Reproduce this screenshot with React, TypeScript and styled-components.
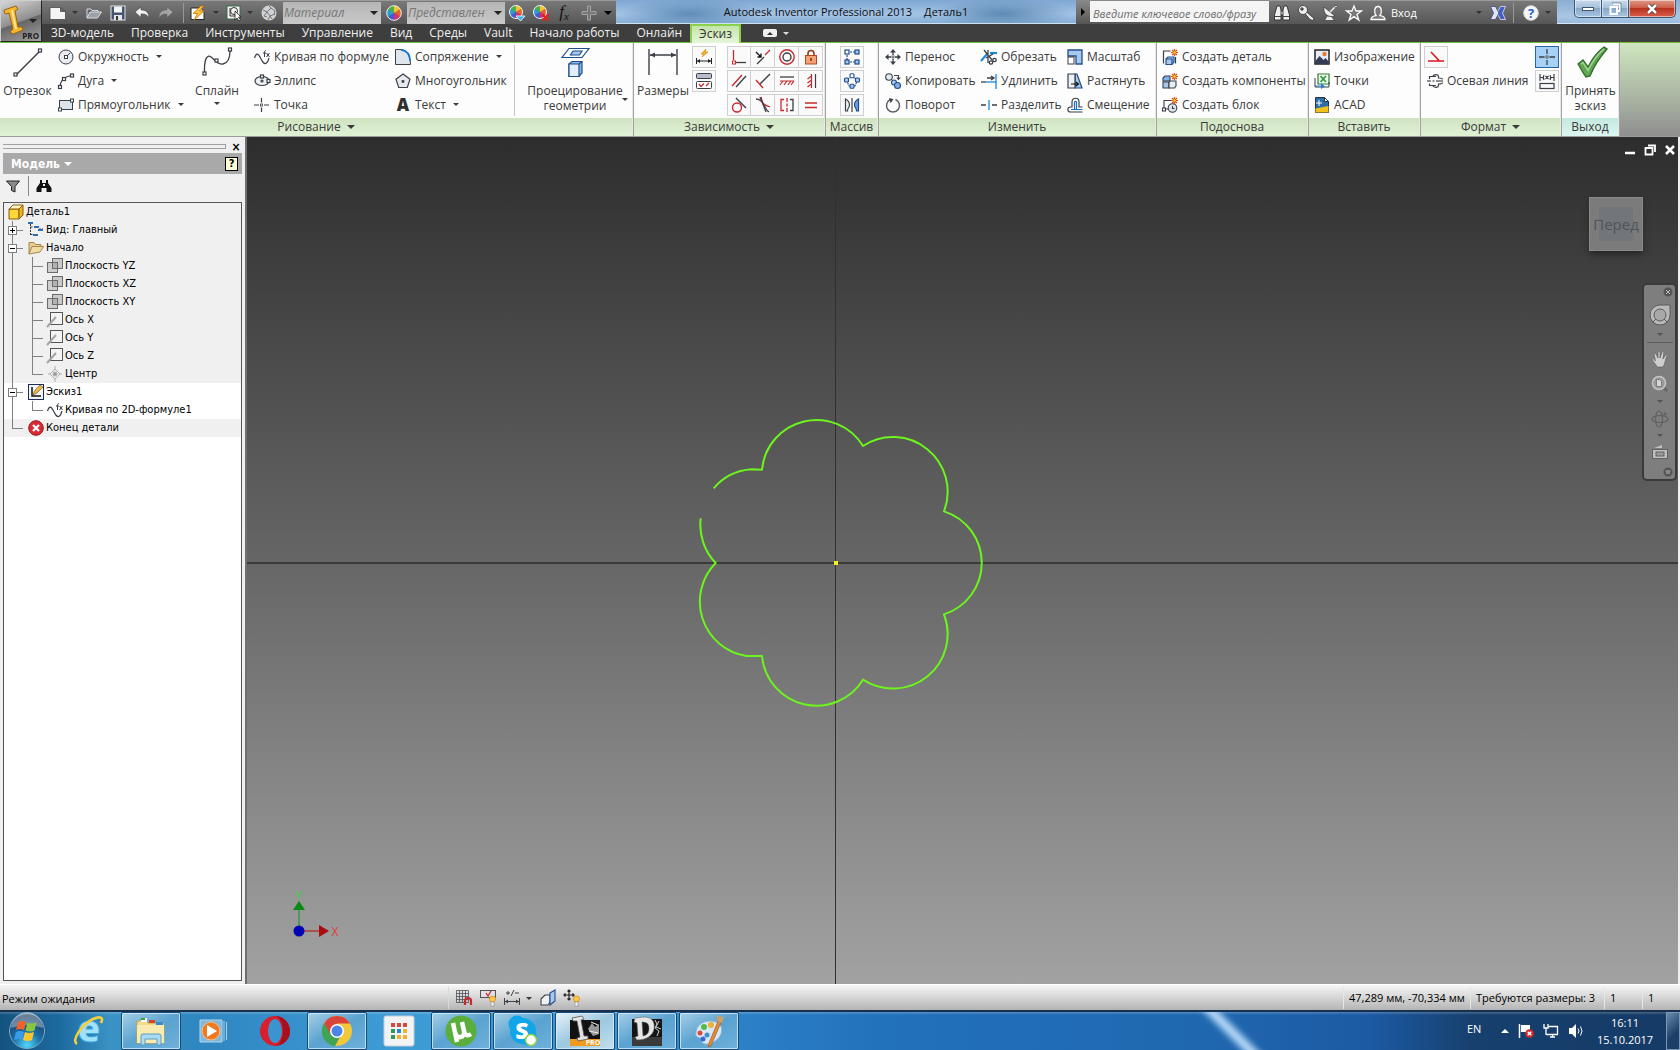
import React, { ReactNode } from "react";
import styled, { createGlobalStyle, css } from "styled-components";

const UI = `"Open Sans", "Noto Sans", sans-serif`;
const TAHOMA = `"DejaVu Sans Condensed", "DejaVu Sans", sans-serif`;

const Global = createGlobalStyle`
  * { box-sizing: border-box; }
  html, body { margin: 0; height: 100%; overflow: hidden; }
  #root { height: 100vh; }
  body { font-family: ${UI}; font-size: 12px; color: #3a3a3a; background: #3e3e3e; }
  button { font: inherit; color: inherit; border: 0; padding: 0; margin: 0; background: none; cursor: default; }
  svg { display: block; flex: none; overflow: visible; }
`;

/* ---------- icons ---------- */

const dk = "#3b3f46";
const bl = "#1f4f8a";
const lb = "#a9c8ee";
const rd = "#c8282c";

const node = (x: number, y: number, s = dk) => (
  <rect x={x - 1.5} y={y - 1.5} width="3" height="3" fill="#fff" stroke={s} />
);
const spark = (
  <g stroke="#d8540e" strokeWidth="1.2">
    <path d="M12.5 0v7M9 3.5h7M10 1l5 5M15 1l-5 5" />
    <circle cx="12.5" cy="3.5" r="1.6" fill="#ffd24a" stroke="#d8540e" strokeWidth=".6" />
  </g>
);
const wheel = (cx: number, cy: number, r: number) => {
  const cols = ["#f4c430", "#e8622c", "#d22f7c", "#4a58c8", "#2c9bd8", "#4bb04a"];
  return (
    <g>
      {cols.map((c, i) => {
        const a = (i * Math.PI) / 3 - Math.PI / 2;
        const b = a + Math.PI / 3;
        return (
          <path
            key={c}
            fill={c}
            d={`M${cx} ${cy}L${cx + r * Math.cos(a)} ${cy + r * Math.sin(a)}A${r} ${r} 0 0 1 ${cx + r * Math.cos(b)} ${cy + r * Math.sin(b)}Z`}
          />
        );
      })}
      <circle cx={cx} cy={cy} r={r} fill="none" stroke="#f2f2f2" />
    </g>
  );
};
const hatch = (
  <g stroke={rd} strokeWidth="1.1" fill="none">
    <path d="M1 8h14M4 8l-3 4M8 8l-3 4M12 8l-3 4M15 8l-3 4" />
  </g>
);
const bulb = (
  <g>
    <circle cx="12.5" cy="9" r="3" fill="#ffc94a" stroke="#d88a1c" strokeWidth=".8" />
    <rect x="11" y="12" width="3" height="4" fill="#f4f4f4" stroke="#888" strokeWidth=".6" />
  </g>
);
const plane = (
  <g stroke="#6c6c6c" fill="#c9c9c9">
    <rect x="5.5" y=".5" width="10" height="10" />
    <rect x=".5" y="4.5" width="10" height="10" fill="#c4c4c4" fillOpacity=".8" />
    <rect x="5.5" y="4.5" width="5" height="6" fill="#b2b2b2" />
  </g>
);
const axis = (
  <g>
    <rect x="3.5" y=".5" width="12" height="12" fill="#f4f4f4" stroke="#555" />
    <path d="M0 15L9 5" stroke="#a5a5a5" strokeWidth="2" />
  </g>
);
const curveFx = (
  <g fill="none" stroke={dk} strokeWidth="1.2">
    <path d="M.5 9C2 4 4 4 6 8s4 8 6.500 6c1.500-1 2-3 2.500-5" />
    <path d="M10.500 8V3.500c0-1.500.5-2 1.500-2M9 4h3M12.500 4l3 4M15.500 4l-3 4" strokeWidth="1" />
  </g>
);

const icons: Record<string, ReactNode> = {
  circle: <g fill="#e9edf2" stroke={dk}><circle cx="8" cy="8" r="7" /><path d="M8 8l4-4" />{node(8, 8)}</g>,
  arc: <g fill="none" stroke={dk} strokeWidth="1.2"><path d="M2 14C2 8 7 3 14 2.500" />{node(2, 14)}{node(6, 6)}{node(14, 2.5)}</g>,
  rect: <g fill="#dde3ea" stroke={dk}><rect x="1.500" y="3.500" width="13" height="9" />{node(2, 12.5)}{node(14, 3.5)}</g>,
  curve: curveFx,
  ellipse: <g fill="#eceff3" stroke={dk} strokeWidth="1.200"><ellipse cx="8" cy="8" rx="7" ry="4.500" /><circle cx="8" cy="8" r="1" />{node(8, 3.5)}{node(14.5, 8)}</g>,
  point: <g stroke={dk} strokeWidth="1.200"><path d="M0 8h5M10 8h5M7.500 1v4.500M7.500 10.500V15" /><rect x="6.500" y="7" width="2" height="2" fill="#fff" strokeWidth=".8" /></g>,
  fillet: <g><path d="M.5 .5H6C12 1 15 6 15.500 15.500H.5z" fill="#dfe5ec" stroke={dk} /><path d="M6 .8C12 1.500 15 6 15.200 12" fill="none" stroke="#1677d2" strokeWidth="1.800" /></g>,
  polygon: <g fill="#e6eaef" stroke={dk} strokeWidth="1.200"><path d="M8 1l7 5.200-2.700 8.300H3.700L1 6.200z" /><rect x="7" y="7.500" width="2" height="2" fill={dk} strokeWidth=".6" /></g>,
  text: <text x="8" y="14" textAnchor="middle" fontFamily="Open Sans" fontWeight="800" fontSize="17" fill="#2e2e2e">A</text>,
  line: <g fill="none" stroke={dk} strokeWidth="1.400"><path d="M3 28L27 4" /><g strokeWidth="1.200"><rect x="1" y="26" width="3" height="3" fill="#fff" /><rect x="25.500" y="2" width="3" height="3" fill="#fff" /></g></g>,
  spline: <g fill="none" stroke={dk} strokeWidth="1.300"><path d="M2.500 26C2 12 5 7 9 10s7 8 12 7 7-6 7-13" /><g fill="#fff" strokeWidth="1.200"><rect x="1" y="25" width="3" height="3" /><rect x="13" y="12" width="3" height="3" /><rect x="26.500" y="1" width="3" height="3" /></g></g>,
  project: <g stroke={bl} strokeWidth="1.200"><path d="M9 1.500h20l-7 9H2z" fill="#fff" /><path d="M13 4h9l-2.500 4h-9z" fill={lb} /><path d="M9 17l3-2.500h10V26l-3 3.500H9z" fill="#8fb4e4" /><path d="M9 17h10v12.500H9z" fill="#e3eefb" /><path d="M19 17l3-2.500" /></g>,
  dims: <g fill="none" stroke={dk} strokeWidth="1.400"><path d="M1 2v26M29 2v26M2 8h26" /><path d="M2 8l5-2.500v5zM28 8l-5-2.500v5z" fill={dk} stroke="none" /></g>,
  autodim: <g><path d="M10 0L5 5h3L6 8l6-5H9z" fill="#f5b52a" stroke="#d8860e" strokeWidth=".7" /><g stroke="#222" fill="none"><path d="M.5 9v6M15.500 9v6M1 12h14" /><path d="M1 12l3-2v4zM15 12l-3-2v4z" fill="#222" stroke="none" /></g></g>,
  showcon: <g stroke={dk}><rect x=".5" y=".5" width="15" height="5" rx="1" fill="#b9bfc8" /><rect x=".5" y="8.500" width="15" height="7" rx="1" fill="#fff" /><path d="M3 11l2 2.500 3-3M10 13l3-3" fill="none" stroke={rd} strokeWidth="1.300" /></g>,
  coincident: <g fill="none"><path d="M2.500 1v10" stroke={rd} strokeWidth="1.300" /><path d="M5 13.500h10" stroke={dk} strokeWidth="1.300" /><rect x="1.500" y="12" width="3" height="3" fill="#fff" stroke={rd} /></g>,
  collinear: <g fill="none" strokeWidth="1.300"><path d="M15 1L10 6" stroke={rd} /><path d="M9 8l-7 7" stroke={dk} /><path d="M1 3l5 5M6 4.500V8H2.500" stroke="#111" /></g>,
  concentric: <g fill="none" strokeWidth="1.400"><circle cx="8" cy="8" r="7.200" stroke={rd} /><circle cx="8" cy="8" r="4" stroke={dk} /></g>,
  lock: <g><path d="M5 7V4.500a3 3 0 016 0V7" fill="none" stroke="#8c3a1a" strokeWidth="1.600" /><rect x="2.500" y="6.500" width="11" height="8.500" fill="#f2a274" stroke="#b8461c" /><path d="M8 9v3" stroke="#7c2a10" strokeWidth="1.500" /></g>,
  parallel: <g strokeWidth="1.400"><path d="M1 13L11 2" stroke={rd} /><path d="M5 14L15 3" stroke={dk} /></g>,
  perp: <g strokeWidth="1.400" fill="none"><path d="M5 11L15 1" stroke={dk} /><path d="M1 7l7 8" stroke={rd} /></g>,
  horiz: <g><path d="M1 4h14" stroke={dk} strokeWidth="1.300" />{hatch}</g>,
  vert: <g fill="none" strokeWidth="1.200"><path d="M8.500 1v14M8.500 3l-4 3M8.500 7l-4 3M8.500 11l-4 3" stroke={rd} /><path d="M12.500 1v14" stroke={dk} /></g>,
  tangent: <g fill="none" strokeWidth="1.400"><circle cx="6" cy="10.500" r="4.500" stroke={rd} /><path d="M5 1l10 10" stroke={dk} /></g>,
  smooth: <g fill="none" strokeWidth="1.300"><path d="M1 2c5 0 7 4 9 8 1 2 2 4 4 5" stroke={dk} /><path d="M5 0c1 6 4 8 10 10" stroke={rd} /><path d="M6 0c1 5 3 10 5 15" stroke={dk} /></g>,
  symm: <g fill="none" strokeWidth="1.300"><path d="M5 2.500H2v11h3M8 1v4M8 6.500v3M8 11v4" stroke={rd} /><path d="M11 2.500h3v11h-3" stroke={dk} /></g>,
  equal: <path d="M2 6h12M2 10.500h12" stroke={rd} strokeWidth="1.400" />,
  rectarr: <g stroke={bl} fill="#fff" strokeWidth="1.200"><path d="M3 3h10M3 13h10M3 3v10" strokeDasharray="2 1" /><rect x="1" y="1" width="4" height="4" /><rect x="11" y="1" width="4" height="4" fill={lb} /><rect x="1" y="11" width="4" height="4" fill={lb} /><rect x="11" y="11" width="4" height="4" fill={lb} /></g>,
  cirarr: <g stroke={bl} fill={lb} strokeWidth="1.100"><path d="M8 3l5.500 4L11 13H5L2.500 7z" fill="none" strokeDasharray="2 1" /><rect x="6" y=".7" width="4" height="4" rx="1" fill="#fff" /><rect x="11.500" y="5" width="4" height="4" rx="1" /><rect x=".5" y="5" width="4" height="4" rx="1" /><rect x="6" y="11.300" width="4" height="4" rx="1" /></g>,
  mirror: <g strokeWidth="1.200"><path d="M8 1v14" stroke={dk} /><path d="M1.500 14V2c3 1.500 4 3 4 6s-2 2.500-2 6z" fill="#eef2f7" stroke={dk} /><path d="M14.500 14V2c-3 1.500-4 3-4 6s2 2.500 2 6z" fill="#6f9fe0" stroke={bl} /></g>,
  move: <g fill={dk}><path d="M8 0l3 3.500H5zM8 16l3-3.500H5zM0 8l3.500-3v6zM16 8l-3.500-3v6z" /><path d="M8 3v3M8 10v3M3 8h3M10 8h3" stroke={dk} strokeWidth="1.300" /><rect x="7" y="7" width="2" height="2" fill="#fff" stroke={dk} strokeWidth=".8" /></g>,
  copy: <g stroke={dk} strokeWidth="1.100"><circle cx="4" cy="4" r="3.300" fill="#e2ebf7" /><circle cx="9" cy="9.500" r="2.500" fill={lb} stroke={bl} /><circle cx="12.500" cy="12.500" r="3" fill="#86afe6" stroke={bl} /><path d="M9 2.500h4.500V6M11.800 4.500l1.700 2 1.700-2" fill="none" /></g>,
  rotate: <g fill="none" stroke={dk} strokeWidth="1.500"><path d="M10.500 2.500a6.500 6.500 0 11-5 0" stroke="#5a5f66" /><path d="M4 1l4.500 1.200L5.500 6z" fill={dk} stroke="none" /></g>,
  trim: <g fill="none" strokeWidth="1.300"><path d="M9 4h7" stroke="#1c87d8" strokeWidth="2.200" /><path d="M0 12L6 5" stroke="#1c87d8" strokeWidth="2" /><path d="M3 1l8 10M7 14V1M5 9l7-4" stroke={dk} /><circle cx="13.500" cy="11" r="1.700" stroke={dk} /><circle cx="10" cy="13.500" r="1.700" stroke={dk} /></g>,
  extend: <g fill="none" strokeWidth="1.300"><path d="M0 9h5" stroke={dk} /><path d="M5 9h10" stroke="#1c87d8" /><path d="M15 1v15" stroke="#1c87d8" /><path d="M6 5h6M10 3l3 2-3 2" stroke={dk} /></g>,
  split: <g strokeWidth="1.300"><path d="M0 8h5M11 8h5" stroke={dk} /><path d="M8 3v10" stroke="#1c87d8" /></g>,
  scale: <g stroke={bl}><path d="M1 1h14v14H9V7H1z" fill={lb} strokeWidth="1.300" /><rect x="1" y="8" width="6" height="7" fill="#fff" stroke={dk} /></g>,
  stretch: <g strokeWidth="1.200"><path d="M8 1h2l5 14H8z" fill={lb} stroke={bl} /><path d="M1 1h7v14H1z" fill="#eef2f7" stroke={dk} /><path d="M4 11h7M9 9l2.500 2L9 13" fill="none" stroke="#111" /></g>,
  offset: <g fill="none" strokeWidth="1.200"><path d="M15.500 15H3.500c-3.500 0-3.500-5 0-5H5V5c0-5 7-5 7 0v5h3.500" stroke={dk} /><path d="M15.500 12.500H4M7.500 12V5.500c0-1.500 2-1.500 2 0V12" stroke="#1c6fc0" /></g>,
  mkpart: <g strokeWidth="1.200"><path d="M1.500 14.500V2h7" fill="none" stroke={dk} /><path d="M13.500 8v6.500" stroke={dk} /><path d="M4 10l2-2h6v5l-2 2.500H4z" fill={lb} stroke={bl} /><path d="M4 10h6v5.500" fill="none" stroke={bl} />{spark}</g>,
  mkcomp: <g strokeWidth="1.100" stroke={dk}><path d="M1 5l2-2h5v5H1z" fill="#7db4ee" /><path d="M1 9h6v6H1z" fill={lb} /><path d="M7 9l1-1h6v5l-1.500 2H7z" fill="#e8eef6" />{spark}</g>,
  mkblock: <g stroke={dk} strokeWidth="1.100" fill="none"><path d="M2 12V3.500h7M2 12h4" />{node(2, 12.5)}<circle cx="10.500" cy="11" r="4.300" fill="#dfe4ea" /><path d="M10.500 9v2.500h2" />{spark}</g>,
  image: <g><rect x="1" y="1" width="14" height="14" fill="#e8ecf4" stroke="#222" strokeWidth="1.500" /><path d="M1.500 12l4-5 4 4 2-2 3.500 4v2h-13.500z" fill="#333b55" /><circle cx="10.500" cy="5" r="2.200" fill="#e87a3c" /></g>,
  points: <g><path d="M4 1h11v10H4z" fill="#f4fff4" stroke="#2e7a36" strokeWidth="1.200" /><path d="M6.500 3l5.500 6M12 3L6.500 9" stroke="#2e9a3a" strokeWidth="1.800" /><path d="M1 5v9h14V9" fill="none" stroke={dk} /><path d="M1 12.500h6V10l4 3.500L7 16v-2.500H1z" fill="#2c7cd0" /></g>,
  acad: <g><path d="M1.500.5h9l4 4v11h-13z" fill="#2f6ea8" stroke="#234" /><path d="M1.500 15.500v-4l13-2.500v6.500z" fill="#f2c21c" /><path d="M5 3v6M2 6h6" stroke="#fff" /><path d="M10.500.5v4h4z" fill="#fff" stroke="#234" /></g>,
  constr: <g fill="none" stroke="#e0161c" strokeWidth="1.600"><path d="M0 12h16M3 3l8 8.500" /></g>,
  centerline: <g fill="none" stroke={dk} strokeWidth="1.200"><path d="M2.500 6V3.500H9M2.500 10.500V12.500H9M5.500 3.500c2-3 6-2 6 0v1.500c3 0 4 1 4 1.500M5.500 12.500c2 3 6 2 6 0V11c3 0 4-1 4-1.500" /><path d="M0 8h4M5.500 8h2M9 8h7" stroke="#222" /></g>,
  centerpt: <g stroke={dk} strokeWidth="1.300"><path d="M0 8h5.500M10.500 8H16M8 0v5M8 11v5" /><rect x="7" y="7" width="2" height="2" fill="#fff" strokeWidth=".8" /></g>,
  driven: <g fill="none" stroke={dk} strokeWidth="1.200"><path d="M1 1v7M15 1v7M1 4.500h3M12 4.500h3M5 2q-1.500 2.500 0 5M11 2q1.500 2.500 0 5M6.500 3l3 3M9.500 3l-3 3" /><rect x="1" y="10.500" width="14" height="5" /></g>,
  check: <g><path d="M3 18l5-4 5 7C17 13 22 6 29 1l3 2C25 11 19 20 15 30l-4 1C8 27 6 23 3 18z" fill="#62a653" stroke="#2f6b2b" strokeWidth="1.300" /><path d="M6 18l2-1.500 5 8C17 16 22 9 29 3" fill="none" stroke="#a4d594" strokeWidth="1.500" /></g>,
  /* quick access */
  fnew: <path d="M0 2.500h10.500l5 4v8H0zM10.500 2.500v4h5" fill="#f4f4f4" stroke="#4a4a4a" strokeWidth=".8" />,
  fopen: <g stroke="#d9dde2" fill="#5e646b"><path d="M1 13V4h4l1 1.500h6V8" /><path d="M1 13l3-6h11.500l-4 6z" fill="#9ba1a8" /></g>,
  fsave: <g><rect x="1" y="1" width="14" height="14" fill="#47556c" stroke="#dfe3ea" /><rect x="4" y="1.500" width="8" height="6" fill="#f4f4f4" /><rect x="4" y="10" width="8" height="5" fill="#e6e6e6" /><rect x="6" y="11" width="2" height="4" fill="#333" /></g>,
  undo: <path d="M1 7l6-5v3c5 0 8 2.500 8 8-1.500-3-4-4.500-8-4v3.500z" fill="#f1f1f1" stroke="#444" strokeWidth=".6" />,
  redo: <path d="M15 7L9 2v3c-5 0-8 2.500-8 8 1.500-3 4-4.500 8-4v3.500z" fill="#a5a5a5" stroke="#666" strokeWidth=".6" />,
  update: <g><path d="M1 3h10l3 4v7.500H1z" fill="#fff" stroke="#222" /><path d="M11 1L3 8.500h4.500L4 15l10-9H9.500l4-5z" fill="#f8c832" stroke="#d8780e" strokeWidth=".9" /></g>,
  select: <g><rect x="1" y="1" width="13" height="13" fill="#f4f6f4" stroke="#3b6b4a" /><circle cx="8" cy="6" r="3.500" fill="none" stroke="#333" /><path d="M4 3v8h6" fill="none" stroke="#333" /><path d="M9 6v9l2-2 2 3 1.500-1-2-3H15z" fill="#fff" stroke="#222" strokeWidth=".8" /></g>,
  ball: <g><circle cx="8" cy="8" r="7.500" fill="#cfd1d4" /><path d="M2 5l4 2-3 4M6 7l4-4 4 3M6 7l3 4 5-2M9 11l-2 4M10 3L8 1M3 11l3 1M11 14l-2-3M14 6l-1 4" stroke="#777" fill="none" /></g>,
  wheel: wheel(8, 8, 7.3),
  wheelv: <g>{wheel(7, 7, 6.5)}<path d="M7 11h9l-4.500 5z" fill="#38b0ee" stroke="#fff" strokeWidth=".8" /></g>,
  wheelx: <g>{wheel(7, 7, 6.5)}<path d="M9.500 9.500l6 6M15.500 9.500l-6 6" stroke="#e0241c" strokeWidth="2.400" /></g>,
  fx: <text x="7" y="12" textAnchor="middle" fontFamily="Liberation Serif" fontStyle="italic" fontSize="17" fill="#111">f<tspan fontSize="11" dy="3">x</tspan></text>,
  plus: <path d="M6.500 1h3v5.500H15v3H9.500V15h-3V9.500H1v-3h5.500z" fill="#777" stroke="#a3a3a3" />,
  binoc: <g fill="#f0f0f0" stroke="#2c2c2c" strokeWidth=".9"><path d="M6 6h4v4H6z" /><path d="M3 1h3l1 4v10H.5v-5z" /><path d="M13 1h-3L9 5v10h6.500v-5z" /><path d="M.5 11.500H7M9 11.500h6.500" /></g>,
  key: <g stroke="#333" strokeWidth=".8" fill="#ececec"><path d="M6.500 8L8 6.500l8 7-1 2-3-1z" /><circle cx="5" cy="5" r="4.500" /><circle cx="4" cy="4" r="1.300" fill="#666" /></g>,
  dish: <g fill="#eee" stroke="#333" strokeWidth=".7"><path d="M5 11l-2.500 4.500h10L9 11z" /><path d="M2 2c-1 7 4 11 11 9z" /><path d="M8 7l6-6" stroke="#eee" strokeWidth="1.600" /><circle cx="14" cy="1.500" r="1.300" /></g>,
  star: <path d="M8 1l2 5h5.500L11 9.500 12.800 15 8 11.600 3.200 15 5 9.500.5 6H6z" fill="#777" stroke="#fff" strokeWidth="1.300" />,
  person: <g fill="#777" stroke="#fff" strokeWidth="1.300"><path d="M1 14.500c0-3 3-3.500 5-4C4 8 4 1.500 8 1.500S12 8 10 10.500c2 .5 5 1 5 4z" /></g>,
  exch: <g strokeWidth=".8"><path d="M15.500 1.500h-5L7 8l3.500 6.500h5L12.500 8z" fill="#3f5fc4" stroke="#dfe4f4" /><path d="M.5 1.500h5L9 8l-3.500 6.500h-5L3.500 8z" fill="#dfe5f4" stroke="#3a4a7a" /></g>,
  help: <g><circle cx="8" cy="8" r="7.300" fill="#f4f6fa" stroke="#d8d8d8" /><text x="8" y="13" textAnchor="middle" fontFamily="Open Sans" fontWeight="700" fontSize="13" fill="#2a5fc0">?</text></g>,
  /* browser tree */
  part: <g stroke="#8a5a0c" strokeLinejoin="round"><path d="M1 5h10v10H1z" fill="#ffd83c" /><path d="M1 5l4-4h10l-4 4z" fill="#fff6c8" /><path d="M11 5l4-4v10l-4 4z" fill="#f0b418" /></g>,
  view: <g><path d="M2.500 2v11M2.500 5h3M2.500 12.500h3M11 7h4" stroke="#333" fill="none" strokeDasharray="2 1" /><rect x="0" y="0" width="5" height="2" fill="#2f6fb0" /><rect x="6" y="4" width="5" height="2" fill="#2f6fb0" /><rect x="10" y="7" width="5" height="2" fill="#2f6fb0" /><rect x="5" y="12" width="5" height="2" fill="#2f6fb0" /></g>,
  folder: <g stroke="#a8864a"><path d="M1 14V2.500h5l1.500 2H13V7" fill="#e8cd90" /><path d="M1 14l3-7.500h11.500L12 12z" fill="#f2dca6" /></g>,
  plane, axis,
  center: <g fill="none" stroke="#b0b0b0"><path d="M8 3l5 5-5 5-5-5zM8 0v3M8 13v3M1 8h2M13 8h2" /><circle cx="8" cy="8" r="2" fill="#999" /></g>,
  sketch: <g><rect x=".5" y=".5" width="15" height="15" fill="#f4f6fa" stroke="#1c2c5c" /><path d="M4 3v9h9" fill="none" stroke="#111" strokeWidth="1.500" /><path d="M5 11l1.500-4L12 1l3 2-6 6z" fill="#f0b83c" stroke="#7c5a1c" strokeWidth=".7" /></g>,
  end: <g><circle cx="8" cy="8" r="7.300" fill="#dd2a34" stroke="#8c1820" /><path d="M5 5l6 6M11 5l-6 6" stroke="#fff" strokeWidth="2.200" /></g>,
  filter: <path d="M1.500 3h13L10 8.500V14l-3.500-1.500v-4z" fill="#8c8c8c" stroke="#222" />,
  find: <path d="M4 2h2v3h4V2h2v3l3.500 5v4h-5v-4h-5v4h-5v-4L4 5zM7 6h2v2H7z" fill="#111" fillRule="evenodd" />,
  /* status bar */
  snap: <g><path d="M.5.5h12v12H.5zM3.500.5v12M6.500.5v12M9.500.5v12M.5 3.500h12M.5 6.500h12M.5 9.500h12" fill="none" stroke="#4a4e55" strokeWidth=".8" /><path d="M9 15v-4a3 3 0 016 0v4" fill="none" stroke="#c8282c" strokeWidth="2.200" /></g>,
  hint: <g><rect x=".5" y=".5" width="15" height="7" fill="#dfe3e8" stroke="#555" /><path d="M6 3l2 3 3-5" fill="none" stroke={rd} strokeWidth="1.300" />{bulb}</g>,
  tol: <g fill="none" stroke={dk}><path d="M.5 8v7M15.500 8v7M1 11.500h14M2 3h4M4 1v4M7 6l3-6M11 3h4" /><path d="M1 11.500l3-2v4zM15 11.500l-3-2v4z" fill={dk} stroke="none" /></g>,
  slice: <g strokeWidth="1.100"><path d="M1 9l4-4h5v7l-2 3H1z" fill="#eef2f7" stroke={dk} /><path d="M10 3l5-3v11l-5 4z" fill={lb} stroke={bl} /></g>,
  dof: <g><path d="M5 0v10M0 5h10M3.500 1.500L5 0l1.500 1.500M3.500 8.500L5 10l1.500-1.500M1.500 3.500L0 5l1.500 1.500M8.500 3.500L10 5 8.500 6.500" fill="none" stroke="#222" strokeWidth="1.200" />{bulb}</g>,
  flag: <g><path d="M1.500 1v14" stroke="#fff" strokeWidth="1.500" /><path d="M3 2h9v7H3z" fill="#fff" /><circle cx="11.500" cy="10.500" r="4.300" fill="#d8262c" /><path d="M9.700 8.700l3.600 3.600M13.300 8.700l-3.600 3.600" stroke="#fff" strokeWidth="1.400" /></g>,
  net: <g fill="none" stroke="#fff" strokeWidth="1.300"><path d="M5.500 3.500h9v8H3.500M7 14h5M9.500 12v2M1 1v4h4V1M3 5v7" /></g>,
  sound: <g><path d="M1 5h3l4-4v14l-4-4H1z" fill="#fff" /><path d="M10 5.500q2 2.500 0 5M12.500 3.500q3 4.500 0 9" fill="none" stroke="#fff" /></g>,
};

const sizes: Record<string, number> = { line: 30, spline: 30, project: 30, dims: 30, check: 32 };
const Icon = ({ n }: { n: string }) => {
  const s = sizes[n] ?? 16;
  return <svg width={s} height={s} viewBox={`0 0 ${s} ${s}`} aria-hidden="true">{icons[n]}</svg>;
};

const Caret = styled.i<{ $c?: string; $big?: boolean }>`
  flex: none; width: 0; height: 0;
  border: ${(p) => (p.$big ? 4 : 3)}px solid transparent;
  border-top-color: ${(p) => p.$c ?? "#3a3a3a"};
  border-bottom: 0;
`;

/* ---------- frame ---------- */

const Shell = styled.div`display: flex; flex-direction: column; height: 100vh;`;
const Header = styled.header`display: grid; grid-template-columns: 42px 1fr; grid-template-rows: 24px 18px; background: #3e3e3e; border-bottom: 1px solid #74bd38;`;
const AppButton = styled.button`
  grid-row: span 2; position: relative; border: 1px solid #cfcfcf; border-right-color: #222; border-bottom-color: #222;
  background: linear-gradient(160deg, #d6d6d6 0%, #8f8f8f 50%, #666 52%, #a2a2a2 100%);
`;
const Pro = styled.b`position: absolute; right: 2px; bottom: 1px; font-size: 8px; line-height: 8px; color: #1c1c1c;`;
const AppCaret = styled.span`position: absolute; right: 4px; top: 18px; display: flex;`;
const TitleBar = styled.div`display: flex; min-width: 0; background: linear-gradient(#7a7a7a, #565656);`;
const Glass = styled.div`
  flex: 1; display: flex; align-items: center; justify-content: center; gap: 12px; color: #101010; white-space: nowrap; font-size: 11px;
  background: radial-gradient(ellipse 70px 16px at 16% 60%, #5f8cb8, transparent), radial-gradient(ellipse 70px 16px at 84% 60%, #5e8ab4, transparent), linear-gradient(#7fa7d2, #a3c3e4 60%, #88b0d8);
  border-bottom: 1px solid #cfe0f0;
`;
const QuickBar = styled.div`display: flex; align-items: center; width: 574px; padding-left: 8px; border-top: 1px solid #9a9a9a;`;
const QBtn = styled.button<{ $w?: number }>`
  display: flex; align-items: center; justify-content: center; flex: none; width: ${(p) => p.$w ?? 24}px; height: 22px;
`;
const VSep = styled.span<{ $c?: string }>`width: 1px; height: 20px; margin: 0 3px; background: ${(p) => p.$c ?? "#999"};`;
const Combo = styled.label`
  position: relative; display: flex; align-items: center; width: 98px; height: 22px; flex: none;
  background: linear-gradient(#b5b5b5, #c9c9c9);
  select { appearance: none; width: 100%; height: 100%; border: 0; padding: 0 16px 0 1px; background: none; font: italic 12px ${UI}; color: #777; text-overflow: clip; }
  i { position: absolute; right: 3px; pointer-events: none; }
`;
const SearchToggle = styled.button`width: 14px; display: flex; align-items: center; justify-content: center; background: linear-gradient(#8a8a8a, #555);
  &::before { content: ""; border: 4px solid transparent; border-left-color: #000; border-right: 0; }
`;
const Search = styled.input`
  width: 179px; height: 22px; border: 0; border-top: 1px solid #888; padding: 4px 3px 0; font: italic 11px ${UI}; background: #f4f4f4; color: #666;
  &::placeholder { color: #6c6c6c; opacity: 1; }
`;
const InfoBar = styled.div`display: flex; align-items: center; width: 288px; padding-left: 1px; border-top: 1px solid #9a9a9a;`;
const SignIn = styled.button`display: flex; align-items: center; justify-content: space-between; width: 92px; color: #fff; padding-left: 1px; font-size: 11px; margin-right: 4px;`;
const WinGlass = styled.div`
  width: 123px; display: flex; justify-content: flex-end; align-items: flex-start; padding-right: 4px;
  background: linear-gradient(#8aaed2, #a9c6e4 70%, #9bbcdc); border-bottom: 1px solid #d8e6f4;
`;
const WinBtn = styled.button<{ $close?: boolean }>`
  width: ${(p) => (p.$close ? 48 : 28)}px; height: 18px; display: flex; align-items: center; justify-content: center;
  border: 1px solid #3c5878; border-top: 0; margin-left: -1px; box-shadow: inset 0 0 0 1px rgba(255,255,255,.5);
  background: ${(p) => (p.$close ? "linear-gradient(#dd9a88, #cc5a44 48%, #b8321c 50%, #d8604c)" : "linear-gradient(#c8daec, #a4c0dc 48%, #88a8c8 50%, #a8c6e2)")};
  &:first-child { border-radius: 0 0 0 5px; }
  &:last-child { border-radius: 0 0 5px 0; }
`;
const Tabs = styled.nav`display: flex; align-items: stretch; color: #f0f0f0;`;
const Tab = styled.button<{ $on?: boolean }>`
  padding: 0 8px 1px 9px; line-height: 16px; white-space: nowrap;
  ${(p) => p.$on && css`margin-bottom: -1px; color: #333; border: 2px solid #8ad04a; border-bottom: 0; padding: 0 7px 2px; line-height: 14px; background: linear-gradient(#c4e4a8, #e6f5da);`}
`;
const Pill = styled.button`
  display: flex; align-items: center; gap: 6px; margin-left: 22px;
  span { width: 14px; height: 8px; border-radius: 2px; background: #f0f0f0; display: flex; align-items: center; justify-content: center; }
  span::before { content: ""; border: 3px solid transparent; border-bottom-color: #333; border-top: 0; }
`;

/* ---------- ribbon ---------- */

const Ribbon = styled.div`display: flex; height: 94px; flex: none; background: linear-gradient(#cfe6bf 0%, #a9b3a2 60%, #8f8f8f 100%); border-bottom: 1px solid #9c9c9c;`;
const Panel = styled.section<{ $w: number }>`
  width: ${(p) => p.$w}px; flex: none; display: flex; flex-direction: column; background: #fdfdfd; border-right: 1px solid #a2a2a2; box-shadow: inset -1px 0 #e8e8e8;
`;
const PanelBody = styled.div<{ $pl?: number; $center?: boolean }>`
  flex: 1; display: flex; padding: 2px 0 0 ${(p) => p.$pl ?? 0}px; ${(p) => p.$center && "justify-content: center;"}
`;
const PanelLabel = styled.h2<{ $exit?: boolean }>`
  margin: 0 1px 0 0; height: 18px; display: flex; align-items: center; justify-content: center; gap: 6px; font-weight: 400; font-size: 12px; line-height: 18px;
  background: ${(p) => (p.$exit ? "linear-gradient(#c4e8e0, #dcf6f0)" : "linear-gradient(#cfe3c2, #e0f2d4)")};
`;
const Stack = styled.div<{ $w?: number; $pl?: number }>`
  display: flex; flex-direction: column; width: ${(p) => (p.$w ? p.$w + "px" : "auto")}; padding-left: ${(p) => p.$pl ?? 0}px;
`;
const ToolBtn = styled.button`display: flex; align-items: center; gap: 4px; height: 24px; padding-bottom: 1px; white-space: nowrap; i { margin-left: 3px; }`;
const BigBtn = styled.button<{ $w?: number; $pl?: number }>`
  width: ${(p) => (p.$w ? p.$w + "px" : "auto")}; ${(p) => !p.$w && "flex: 1;"} padding: 1px 0 0 ${(p) => p.$pl ?? 0}px;
  display: flex; flex-direction: column; align-items: center; line-height: 15px; position: relative; white-space: nowrap;
  svg { height: 32px; margin-bottom: 5px; }
  > i { margin-top: 4px; }
`;
const SideCaret = styled.span`position: absolute; right: 5px; top: 53px; display: flex;`;
const Rule = styled.span`width: 1px; margin: 0 0 2px; background: #c4c4c4;`;
const Mini = styled.button<{ $on?: boolean }>`
  width: 24px; height: 22px; margin: 1px 0; display: flex; align-items: center; justify-content: center;
  border: 1px solid ${(p) => (p.$on ? "#2a62a8" : "#cfcfcf")}; background: ${(p) => (p.$on ? "#a6d0f6" : "#fafafa")};
`;
const MiniGrid = styled.div`
  display: grid; grid-template-columns: repeat(4, 24px); grid-auto-rows: 24px; margin-left: 11px;
  button:not(:nth-child(4n + 1)) { border-left: 0; }
`;

const Tool = ({ i, t, c }: { i: string; t: string; c?: boolean }) => (
  <ToolBtn><Icon n={i} />{t}{c && <Caret />}</ToolBtn>
);

/* ---------- workspace ---------- */

const Work = styled.main`flex: 1; min-height: 0; display: flex; background: #f0f0f0;`;
const Browser = styled.aside`
  width: 247px; flex: none; display: flex; flex-direction: column; padding: 3px 3px 3px 3px; background: #f0f0f0; border-right: 2px solid #6f6f6f; font: 11px/18px ${TAHOMA}; color: #000;
`;
const Grip = styled.div`display: flex; align-items: center; height: 13px; gap: 4px;
  span { flex: 1; height: 5px; border: 1px solid #a0a0a0; border-left: 0; }
  button { width: 12px; font: bold 12px/10px ${TAHOMA}; }
`;
const BrowserTitle = styled.h1`
  margin: 0; height: 21px; padding: 0 4px 0 8px; display: flex; align-items: center; gap: 4px; background: #a9a9a9; color: #fff; font: bold 12px ${TAHOMA};
  button { margin-left: auto; width: 13px; height: 14px; border: 1px solid #000; background: #ffffd8; color: #000; font: bold 11px/11px ${TAHOMA}; }
`;
const BrowserTools = styled.div`height: 28px; display: flex; align-items: center; gap: 4px; padding: 0 2px 4px; button { padding: 0; }`;
const TreeBox = styled.ul`flex: 1; margin: 0; padding: 0; list-style: none; border: 1px solid #555; background: #fff;`;
const TreeRow = styled.li<{ $white?: boolean; $root?: boolean }>`
  height: 18px; display: flex; align-items: center; gap: 2px; white-space: nowrap; background: ${(p) => (p.$white ? "#fff" : "#f0f0f0")};
  ${(p) => p.$root && "padding-left: 4px;"}
`;
const Cell = styled.span<{ $w: number; $x: number; $v?: "full" | "half"; $h?: boolean }>`
  position: relative; width: ${(p) => p.$w}px; height: 18px; flex: none; margin-right: -2px;
  &::before { content: ""; position: absolute; left: ${(p) => p.$x}px; top: 0; width: 1px; height: ${(p) => (p.$v === "half" ? 9 : 18)}px; background: ${(p) => (p.$v ? "#808080" : "transparent")}; }
  &::after { content: ""; position: absolute; left: ${(p) => p.$x}px; top: 9px; width: 11px; height: 1px; background: ${(p) => (p.$h ? "#808080" : "transparent")}; }
`;
const Expander = styled.button`
  position: absolute; z-index: 1; left: 4px; top: 5px; width: 9px; height: 9px; border: 1px solid #808080; background: #fff;
  &::before { content: ""; position: absolute; left: 1px; top: 3px; width: 5px; height: 1px; background: #000; }
  &[aria-expanded="false"]::after { content: ""; position: absolute; left: 3px; top: 1px; width: 1px; height: 5px; background: #000; }
`;

type TreeNode = { d: number; i: string; t: string; box?: "+" | "-"; last?: boolean; white?: boolean };
const tree: TreeNode[] = [
  { d: 0, i: "part", t: "Деталь1" },
  { d: 1, i: "view", t: "Вид: Главный", box: "+" },
  { d: 1, i: "folder", t: "Начало", box: "-" },
  { d: 2, i: "plane", t: "Плоскость YZ" },
  { d: 2, i: "plane", t: "Плоскость XZ" },
  { d: 2, i: "plane", t: "Плоскость XY" },
  { d: 2, i: "axis", t: "Ось X" },
  { d: 2, i: "axis", t: "Ось Y" },
  { d: 2, i: "axis", t: "Ось Z" },
  { d: 2, i: "center", t: "Центр", last: true },
  { d: 1, i: "sketch", t: "Эскиз1", box: "-", white: true },
  { d: 2, i: "curve", t: "Кривая по 2D-формуле1", last: true, white: true },
  { d: 1, i: "end", t: "Конец детали", last: true },
];

const Canvas = styled.div`
  flex: 1; position: relative; overflow: hidden; margin-right: 2px;
  background: linear-gradient(#2d2d2d 0%, #4a4a4a 25%, #666 50%, #858585 75%, #a2a2a2 100%);
`;
const AxisX = styled.span`position: absolute; left: 0; right: 0; top: 425px; height: 2px; background: rgba(40, 40, 40, .7);`;
const AxisY = styled.span`position: absolute; top: 0; bottom: 0; left: 588px; width: 1px; background: #303030;`;
const Flower = styled.svg`position: absolute; left: 433px; top: 263px;`;
const Triad = styled.svg`position: absolute; left: 33px; bottom: 35px;`;
const DocButtons = styled.div`position: absolute; right: 2px; top: 7px; display: flex; gap: 8px;`;
const Cube = styled.button`
  position: absolute; right: 35px; top: 60px; width: 54px; height: 54px; border: 1px solid #8a8a8a; background: #7b7b7b;
  box-shadow: 0 4px 6px -1px rgba(20,20,20,.6); color: #50545a;
  display: flex; align-items: center; justify-content: center;
  span { width: 34px; height: 34px; display: flex; align-items: center; justify-content: center; background: #72767a; font: 15px "Liberation Sans Narrow", "Open Sans", sans-serif; }
`;
const NavBar = styled.div`
  position: absolute; right: 1px; top: 146px; width: 35px; height: 198px; padding: 2px 0; border: 2px solid #3a3a3a; border-radius: 5px; background: #7e7e7e;
  display: flex; flex-direction: column; align-items: center; justify-content: space-between;
  button { display: flex; }
  hr { width: 26px; margin: 0; border: 0; border-top: 1px solid #5c5c5c; }
`;
const NavCorner = styled.button`align-self: flex-end; margin-right: 2px;`;

/* ---------- status + taskbar ---------- */

const Status = styled.footer`
  height: 26px; flex: none; display: flex; align-items: center; padding-top: 1px; font-size: 11px; color: #000; border-top: 1px solid #fff;
  background: linear-gradient(#f6f6f6, #d6d6d6 50%, #b4b4b4);
`;
const StatusMsg = styled.span`width: 448px; padding-left: 2px;`;
const StatusTools = styled.div`display: flex; align-items: center; gap: 8px; flex: 1; border-left: 1px solid #d8d8d8; padding-left: 7px; height: 22px; button { display: flex; align-items: center; gap: 6px; }`;
const StatusCell = styled.span<{ $w: number }>`width: ${(p) => p.$w}px; height: 22px; line-height: 22px; padding-left: 5px; border-left: 1px solid #e6e6e6; white-space: nowrap;`;
const Taskbar = styled.div`
  height: 40px; flex: none; display: flex; align-items: center; border-top: 2px solid #17304e;
  background:
    linear-gradient(rgba(255,255,255,.22), transparent 3px),
    linear-gradient(90deg, #14527f 0, #1d6aa0 60px, #3a93c4 110px, #2f86c0 200px, #3d9bd6 390px, #3a96d2 620px, #2d83c8 720px, #2271bb 880px, #1f68b0 1200px, #1c5aa4 1370px, #17406f 1470px, #153a66 100%);
`;
const Orb = styled.button`width: 54px; margin-right: 5px; display: flex; justify-content: center;`;
const Task = styled.button<{ $open?: boolean; $active?: boolean }>`
  width: 60px; height: 38px; margin-right: 2px; display: flex; align-items: center; justify-content: center; border-radius: 2px;
  ${(p) => p.$open && css`
    border: 1px solid #184a78; box-shadow: inset 0 0 0 1px rgba(220,240,255,.75);
    background: ${p.$active ? "linear-gradient(150deg, #e8f2f8, #9cc8e0 50%, #c2dfee)" : "linear-gradient(150deg, #a6cfe6, #5aa2d0 50%, #6fb2dc)"};
  `}
`;
const Streak = styled.span`flex: 1; align-self: stretch; overflow: hidden; position: relative;
  &::before { content: ""; position: absolute; left: 486px; top: -20px; width: 10px; height: 80px; background: #b4d8f8; filter: blur(3px); transform: rotate(-45deg); }
`;
const Tray = styled.div`display: flex; align-items: center; color: #fff; height: 100%; font-size: 11px; button { display: flex; }`;
const Lang = styled.button`width: 34px; padding-bottom: 4px; line-height: 16px;`;
const Up = styled.button`width: 17px; &::before { content: ""; border: 4px solid transparent; border-bottom-color: #fff; border-top: 0; }`;
const TrayIcons = styled.div`display: flex; gap: 9px;`;
const Clock = styled.time`width: 82px; text-align: center; line-height: 17px;`;
const Peek = styled.button`width: 14px; height: 38px; border: 1px solid #7898b8; background: linear-gradient(135deg, #6d8cad, #1c3f68 60%);`;

const taskIcons: Record<string, ReactNode> = {
  ie: <g><text x="16" y="27" textAnchor="middle" fontFamily="Open Sans" fontWeight="800" fontSize="37" fill="#9fe0fb" stroke="#3ba9e0" strokeWidth=".8">e</text><path d="M4 29C-2 26 8 10 20 4c7-3 11-2 8 4" fill="none" stroke="#f6cf3a" strokeWidth="2.600" /></g>,
  explorer: <g><path d="M2 6h9l2 2h16v20H2z" fill="#f3dc8c" stroke="#c7a145" /><path d="M6 3h6v4H6z" fill="#fff" /><path d="M6 3h4v2H6z" fill="#3aa03a" /><path d="M14 5h6v3h-6z" fill="#d8452c" /><path d="M21 7h7v3h-7z" fill="#2c8cd8" /><path d="M2 10h27v18H2z" fill="#f9ebb0" /><path d="M6 30v-9q0-2 2-2h16q2 0 2 2v9h-4v-6H10v6z" fill="#a8dcf2" stroke="#5a9cc0" /></g>,
  wmp: <g><path d="M3 5h22v22H3z" fill="#7fb8de" stroke="#b4d8ee" /><path d="M27 6v20M29.500 7v18" stroke="#a8d0ea" /><circle cx="14" cy="16" r="9" fill="#f07a20" stroke="#fbc08a" /><path d="M10 10l10 6-10 6z" fill="#fff" /></g>,
  opera: <g><ellipse cx="16" cy="16" rx="15" ry="15" fill="#d81f2c" /><ellipse cx="16" cy="16" rx="7" ry="12" fill="#3a94cf" /><path d="M16 1a15 15 0 010 30c5-1 8-8 8-15S21 2 16 1z" fill="#a80e1c" /></g>,
  chrome: <g><circle cx="16" cy="16" r="15" fill="#f3c73a" /><path d="M3 8.500A15 15 0 0014 31l6-11-8 1z" fill="#3fa455" /><path d="M3 8.500A15 15 0 0129 8.500H16L10 20z" fill="#d9453a" /><path d="M3 8.500l6.500 11L14 23l-1 8A15 15 0 013 8.500z" fill="#3fa455" /><circle cx="16" cy="16" r="7" fill="#fff" /><circle cx="16" cy="16" r="5.500" fill="#4a86e8" /></g>,
  apps: <g><rect x="1" y="1" width="30" height="30" rx="2" fill="#f1f3f4" stroke="#c4d0d8" />{["#d8453a", "#d8453a", "#d8453a", "#2f9a58", "#2c86d8", "#f0b030", "#2f9a58", "#f0b030", "#f0b030"].map((c, k) => <rect key={k} x={8 + (k % 3) * 6} y={8 + Math.floor(k / 3) * 6} width="4" height="4" fill={c} />)}</g>,
  utorrent: <g><circle cx="16" cy="16" r="15.500" fill="#5aae3c" /><path d="M8 8l4 19M10 17c2 8 10 6 9-1L17 7M19 16c1 5 4 5 7 3" fill="none" stroke="#fff" strokeWidth="4.500" /></g>,
  skype: <g><circle cx="10" cy="9" r="8.500" fill="#12a5e8" /><circle cx="16" cy="16" r="13" fill="#12a5e8" /><circle cx="22" cy="23" r="8" fill="#12a5e8" /><text x="15" y="24" textAnchor="middle" fontFamily="Open Sans" fontWeight="800" fontSize="23" fill="#fff">S</text><circle cx="24" cy="25" r="5.500" fill="#fff" stroke="#8ed04a" strokeWidth="1.500" /></g>,
  inventor: <g><rect x="1" y="5" width="30" height="26" fill="#121212" /><path d="M19 14l4-6 3 4 4-3v10l-6 2z" fill="#999" /><path d="M22 7l7 3M20 16l9 2" stroke="#eee" /><rect x="1" y="24" width="30" height="7" fill="#f29a1c" /><path d="M3 3l10-2 2 3-3 1 3 16 4 0v3L9 26l-1-3 3-1L8 6 4 6z" fill="#e4e4e4" stroke="#555" strokeWidth=".8" /><text x="24" y="30" textAnchor="middle" fontFamily="Open Sans" fontWeight="700" fontSize="7" fill="#fff">PRO</text></g>,
  dwg: <g><rect x="1" y="4" width="30" height="27" fill="#3a3a3a" /><path d="M1 4h30v18H1z" fill="#151515" /><path d="M24 5l2 4-2 4 4 3-2 5M28 6l-3 6 5 2" stroke="#ccc" fill="none" /><path d="M4 3l9-1c9 0 11 6 10 12S16 25 6 25l-2-3 3-1L6 8 3 7zM11 7l1 14c5-1 6-4 6-8s-2-6-7-6z" fill="#e6e6e6" fillRule="evenodd" stroke="#666" strokeWidth=".6" /></g>,
  paint: <g><path d="M3 17C4 8 14 4 23 7c6 2 7 9 4 14s-10 9-15 8-2-5-5-6-5-2-4-6z" fill="#d6e9f8" stroke="#8cb4d4" /><circle cx="14" cy="20" r="2.500" fill="#3f90c8" /><circle cx="11" cy="12" r="3" fill="#58b848" /><circle cx="18" cy="10" r="3" fill="#f0b030" /><circle cx="7" cy="18" r="2.500" fill="#e04a3a" /><circle cx="10" cy="24" r="2.500" fill="#3a6ad0" /><path d="M29 5L18 31l-3 1 1-4L26 4z" fill="#e08a3c" stroke="#a85c1c" strokeWidth=".7" /><path d="M24 1l7 1-2 6-5-2z" fill="#caa06c" /></g>,
};
const TaskIcon = ({ n }: { n: string }) => <svg width="32" height="32" viewBox="0 0 32 32" aria-hidden="true">{taskIcons[n]}</svg>;

const tasks: { n: string; label: string; open?: boolean; active?: boolean }[] = [
  { n: "ie", label: "Internet Explorer" },
  { n: "explorer", label: "Проводник", open: true },
  { n: "wmp", label: "Проигрыватель" },
  { n: "opera", label: "Opera" },
  { n: "chrome", label: "Chrome", open: true },
  { n: "apps", label: "Приложения" },
  { n: "utorrent", label: "uTorrent", open: true },
  { n: "skype", label: "Skype", open: true },
  { n: "inventor", label: "Inventor", open: true, active: true },
  { n: "dwg", label: "Design Review", open: true },
  { n: "paint", label: "Paint", open: true },
];

const tabs = ["3D-модель", "Проверка", "Инструменты", "Управление", "Вид", "Среды", "Vault", "Начало работы", "Онлайн"];
const constraints = ["coincident", "collinear", "concentric", "lock", "parallel", "perp", "horiz", "vert", "tangent", "smooth", "symm", "equal"];

const navStroke = { fill: "#b9b9b9", stroke: "#5c5c5c" };

export default function App() {
  return (
    <Shell>
      <Global />
      <Header>
        <AppButton aria-label="Inventor">
          <svg width="26" height="32" viewBox="0 0 26 32" aria-hidden="true">
            <path d="M3 5l12-4 2 3-3 2 3 16 4 0 1 3-10 4-3-2 3-3L8 8 4 9z" fill="#f5b52c" stroke="#9c6410" />
            <path d="M11 5l4 19" stroke="#ffe49a" strokeWidth="2" />
          </svg>
          <AppCaret><Caret $big $c="#222" /></AppCaret>
          <Pro>PRO</Pro>
        </AppButton>
        <TitleBar>
          <QuickBar>
            <QBtn $w={16} aria-label="Создать"><Icon n="fnew" /></QBtn>
            <QBtn $w={18} aria-label="Список"><Caret $c="#333" /></QBtn>
            <QBtn $w={20} aria-label="Открыть"><Icon n="fopen" /></QBtn>
            <QBtn $w={28} aria-label="Сохранить"><Icon n="fsave" /></QBtn>
            <QBtn $w={20} aria-label="Отменить"><Icon n="undo" /></QBtn>
            <QBtn $w={28} aria-label="Вернуть"><Icon n="redo" /></QBtn>
            <VSep />
            <QBtn $w={22} aria-label="Обновить"><Icon n="update" /></QBtn>
            <QBtn $w={14} aria-label="Список"><Caret $c="#333" /></QBtn>
            <QBtn $w={22} aria-label="Выбор"><Icon n="select" /></QBtn>
            <QBtn $w={10} aria-label="Список"><Caret $c="#333" /></QBtn>
            <QBtn $w={28} aria-label="Материалы"><Icon n="ball" /></QBtn>
            <Combo><select aria-label="Материал"><option>Материал</option></select><Caret $big $c="#222" /></Combo>
            <QBtn $w={26} aria-label="Цвет"><Icon n="wheel" /></QBtn>
            <Combo><select aria-label="Представление"><option>Представлен</option></select><Caret $big $c="#222" /></Combo>
            <QBtn aria-label="Настроить"><Icon n="wheelv" /></QBtn>
            <QBtn aria-label="Очистить"><Icon n="wheelx" /></QBtn>
            <QBtn aria-label="Параметры"><Icon n="fx" /></QBtn>
            <QBtn aria-label="Добавить"><Icon n="plus" /></QBtn>
            <QBtn $w={14} aria-label="Ещё"><Caret $big $c="#000" /></QBtn>
          </QuickBar>
          <Glass><span>Autodesk Inventor Professional 2013</span><span>Деталь1</span></Glass>
          <SearchToggle aria-label="Поиск" />
          <Search aria-label="Поиск" placeholder="Введите ключевое слово/фразу" />
          <InfoBar>
            <QBtn aria-label="Найти"><Icon n="binoc" /></QBtn>
            <QBtn aria-label="Подписка"><Icon n="key" /></QBtn>
            <QBtn aria-label="Связь"><Icon n="dish" /></QBtn>
            <QBtn aria-label="Избранное"><Icon n="star" /></QBtn>
            <QBtn aria-label="Профиль"><Icon n="person" /></QBtn>
            <SignIn>Вход<Caret $c="#333" /></SignIn>
            <QBtn aria-label="Exchange"><Icon n="exch" /></QBtn>
            <VSep />
            <QBtn $w={28} aria-label="Справка"><Icon n="help" /></QBtn>
            <Caret $c="#333" />
          </InfoBar>
          <WinGlass>
            <WinBtn aria-label="Свернуть"><svg width="12" height="6"><rect x=".5" y="1.500" width="11" height="3" fill="#fff" stroke="#456" /></svg></WinBtn>
            <WinBtn aria-label="Восстановить"><svg width="12" height="12"><path d="M4 1h7v7H9M1.500 4h6.500v7H1.500z" fill="none" stroke="#fff" strokeWidth="2" /><path d="M3 0h9v9" fill="none" stroke="#456" strokeWidth=".6" /></svg></WinBtn>
            <WinBtn $close aria-label="Закрыть"><svg width="12" height="10"><path d="M2 1l8 8M10 1L2 9" stroke="#533" strokeWidth="4" /><path d="M2 1l8 8M10 1L2 9" stroke="#fff" strokeWidth="2.500" /></svg></WinBtn>
          </WinGlass>
        </TitleBar>
        <Tabs>
          {tabs.map((t) => <Tab key={t}>{t}</Tab>)}
          <Tab $on>Эскиз</Tab>
          <Pill aria-label="Свернуть ленту"><span /><Caret $c="#ddd" /></Pill>
        </Tabs>
      </Header>

      <Ribbon>
        <Panel $w={634}>
          <PanelBody>
            <BigBtn $w={55}><Icon n="line" />Отрезок</BigBtn>
            <Stack $w={135} $pl={3}>
              <Tool i="circle" t="Окружность" c /><Tool i="arc" t="Дуга" c /><Tool i="rect" t="Прямоугольник" c />
            </Stack>
            <BigBtn $w={54}><Icon n="spline" />Сплайн<Caret /></BigBtn>
            <Stack $w={150} $pl={10}>
              <Tool i="curve" t="Кривая по формуле" /><Tool i="ellipse" t="Эллипс" /><Tool i="point" t="Точка" />
            </Stack>
            <Stack $w={120} $pl={1}>
              <Tool i="fillet" t="Сопряжение" c /><Tool i="polygon" t="Многоугольник" /><Tool i="text" t="Текст" c />
            </Stack>
            <Rule />
            <BigBtn $pl={2}><Icon n="project" /><span>Проецирование<br />геометрии</span><SideCaret><Caret /></SideCaret></BigBtn>
          </PanelBody>
          <PanelLabel>Рисование<Caret $big /></PanelLabel>
        </Panel>
        <Panel $w={192}>
          <PanelBody>
            <BigBtn $w={58}><Icon n="dims" />Размеры</BigBtn>
            <Stack><Mini aria-label="Автоматические размеры"><Icon n="autodim" /></Mini><Mini aria-label="Показать зависимости"><Icon n="showcon" /></Mini></Stack>
            <MiniGrid>{constraints.map((c) => <Mini key={c} aria-label={c}><Icon n={c} /></Mini>)}</MiniGrid>
          </PanelBody>
          <PanelLabel>Зависимость<Caret $big /></PanelLabel>
        </Panel>
        <Panel $w={53}>
          <PanelBody $center>
            <Stack>{["rectarr", "cirarr", "mirror"].map((c) => <Mini key={c} aria-label={c}><Icon n={c} /></Mini>)}</Stack>
          </PanelBody>
          <PanelLabel>Массив</PanelLabel>
        </Panel>
        <Panel $w={278}>
          <PanelBody $pl={6}>
            <Stack $w={96}><Tool i="move" t="Перенос" /><Tool i="copy" t="Копировать" /><Tool i="rotate" t="Поворот" /></Stack>
            <Stack $w={86}><Tool i="trim" t="Обрезать" /><Tool i="extend" t="Удлинить" /><Tool i="split" t="Разделить" /></Stack>
            <Stack><Tool i="scale" t="Масштаб" /><Tool i="stretch" t="Растянуть" /><Tool i="offset" t="Смещение" /></Stack>
          </PanelBody>
          <PanelLabel>Изменить</PanelLabel>
        </Panel>
        <Panel $w={152}>
          <PanelBody $pl={5}>
            <Stack><Tool i="mkpart" t="Создать деталь" /><Tool i="mkcomp" t="Создать компоненты" /><Tool i="mkblock" t="Создать блок" /></Stack>
          </PanelBody>
          <PanelLabel>Подоснова</PanelLabel>
        </Panel>
        <Panel $w={112}>
          <PanelBody $pl={5}>
            <Stack><Tool i="image" t="Изображение" /><Tool i="points" t="Точки" /><Tool i="acad" t="ACAD" /></Stack>
          </PanelBody>
          <PanelLabel>Вставить</PanelLabel>
        </Panel>
        <Panel $w={141}>
          <PanelBody $pl={3}>
            <Stack $w={111}><Mini aria-label="Вспомогательная геометрия"><Icon n="constr" /></Mini><Stack $pl={3}><Tool i="centerline" t="Осевая линия" /></Stack></Stack>
            <Stack><Mini $on aria-label="Точка центра"><Icon n="centerpt" /></Mini><Mini aria-label="Управляемый размер"><Icon n="driven" /></Mini></Stack>
          </PanelBody>
          <PanelLabel>Формат<Caret $big /></PanelLabel>
        </Panel>
        <Panel $w={58}>
          <PanelBody><BigBtn><Icon n="check" /><span>Принять<br />эскиз</span></BigBtn></PanelBody>
          <PanelLabel $exit>Выход</PanelLabel>
        </Panel>
      </Ribbon>

      <Work>
        <Browser>
          <Grip><span /><button aria-label="Закрыть">×</button></Grip>
          <BrowserTitle>Модель<Caret $big $c="#fff" /><button aria-label="Справка">?</button></BrowserTitle>
          <BrowserTools>
            <button aria-label="Фильтр"><Icon n="filter" /></button>
            <VSep $c="#8a8a8a" />
            <button aria-label="Найти"><Icon n="find" /></button>
          </BrowserTools>
          <TreeBox>
            {tree.map((r) => {
              const lastRow = r.i === "end";
              return (
                <TreeRow key={r.t} $white={r.white} $root={r.d === 0}>
                  {r.d > 0 && (
                    <Cell $w={24} $x={8} $v={lastRow ? "half" : "full"} $h={r.d === 1}>
                      {r.box && <Expander aria-label={r.t} aria-expanded={r.box === "-"} />}
                    </Cell>
                  )}
                  {r.d === 2 && <Cell $w={19} $x={4} $v={r.last ? "half" : "full"} $h />}
                  <Icon n={r.i} />{r.t}
                </TreeRow>
              );
            })}
          </TreeBox>
        </Browser>
        <Canvas>
          <AxisX /><AxisY />
          <Flower width="320" height="320" viewBox="0 0 960 960" aria-hidden="true">
            <path
              d="M101 265A164 164 0 0 1 215 208L246 209A164 164 0 0 1 549 138A164 164 0 0 1 792 334A162 162 0 0 1 792 643A164 164 0 0 1 549 839A164 164 0 0 1 246 768L200 768A165 165 0 0 1 107 489A166 166 0 0 1 62 355"
              fill="none" stroke="#6cf41c" strokeWidth="6" strokeLinejoin="round"
            />
            <rect x="462" y="483" width="12" height="12" fill="#f8f020" />
          </Flower>
          <Triad width="64" height="60" viewBox="0 0 64 60" aria-hidden="true">
            <path d="M19 42V20" stroke="#2a9a3a" strokeWidth="1.300" /><path d="M19 12l6 9H13z" fill="#0a8a14" />
            <path d="M19 42h22" stroke="#b02a2a" strokeWidth="1.300" /><path d="M39 36v12l10-6z" fill="#a80c10" />
            <circle cx="19" cy="42" r="5.500" fill="#0404b4" />
            <text x="19" y="10" textAnchor="middle" fontFamily="Open Sans" fontSize="10" fill="#2fd83a">Y</text>
            <text x="55" y="47" textAnchor="middle" fontFamily="Open Sans" fontSize="12" fill="#e03a3a">X</text>
          </Triad>
          <DocButtons>
            <button aria-label="Свернуть"><svg width="12" height="12"><path d="M1 9h10" stroke="#fff" strokeWidth="2.500" /></svg></button>
            <button aria-label="Восстановить"><svg width="12" height="12"><path d="M1.500 4h7v6.500h-7zM4 1.500h7V8" fill="none" stroke="#fff" strokeWidth="1.800" /></svg></button>
            <button aria-label="Закрыть"><svg width="12" height="12"><path d="M2 2l8 8M10 2l-8 8" stroke="#fff" strokeWidth="2.500" /></svg></button>
          </DocButtons>
          <Cube><span>Перед</span></Cube>
          <NavBar>
            <NavCorner aria-label="Закрыть"><svg width="10" height="10"><circle cx="5" cy="5" r="4.500" fill="#555" /><path d="M3 3l4 4M7 3L3 7" stroke="#bbb" /></svg></NavCorner>
            <button aria-label="Штурвал"><svg width="22" height="22"><path d="M11 1h10v10A10 10 0 1111 1z" {...navStroke} /><circle cx="11" cy="11" r="6" fill="#a8a8a8" stroke="#5c5c5c" /><path d="M4 18l3-3M18 18l-3-3" stroke="#5c5c5c" /></svg></button>
            <Caret $c="#555" />
            <hr />
            <button aria-label="Панорамирование"><svg width="18" height="18"><path d="M6 17c-1-3-4-5-5-8 1-1 2 0 3.500 2L3 4c1-1 2-.5 2.500 1L7 8V2c1-1 2-.5 2 .5V8l2-6c1-1 2 0 1.700 1L12 9l2.500-4c1-.5 1.700.5 1.200 1.500C14 10 14 14 12 17z" fill="#cecece" stroke="#666" strokeWidth=".7" /></svg></button>
            <button aria-label="Зумирование"><svg width="18" height="18"><path d="M11 11l5 5" stroke="#666" strokeWidth="3" /><circle cx="8" cy="8" r="6.500" fill="#999" stroke="#c4c4c4" strokeWidth="1.500" /><path d="M5.500 4.500h3l2 2v5h-5z" fill="#d4d4d4" stroke="#666" strokeWidth=".7" /></svg></button>
            <Caret $c="#555" />
            <button aria-label="Орбита"><svg width="18" height="18"><g fill="none" stroke="#606060" strokeWidth="1.200"><ellipse cx="9" cy="9" rx="8" ry="3.500" /><ellipse cx="8" cy="9" rx="3.500" ry="8" /><path d="M12 4h4M14 2v4" /></g></svg></button>
            <Caret $c="#555" />
            <button aria-label="Вид на объект"><svg width="18" height="16"><rect x="1.500" y="5.500" width="15" height="9" fill="#c0c0c0" stroke="#606060" /><rect x="5" y="8" width="8" height="4" fill="#999" stroke="#606060" /><path d="M3 4l8-3v3z" fill="#c0c0c0" /></svg></button>
            <NavCorner aria-label="Настройка"><svg width="10" height="10"><circle cx="5" cy="5" r="4.500" fill="#555" /><path d="M2.500 4h5M3 6h4" stroke="#bbb" /></svg></NavCorner>
          </NavBar>
        </Canvas>
      </Work>

      <Status>
        <StatusMsg>Режим ожидания</StatusMsg>
        <StatusTools>
          <button aria-label="Привязка к сетке"><Icon n="snap" /></button>
          <button aria-label="Показать зависимости"><Icon n="hint" /></button>
          <button aria-label="Допуски"><Icon n="tol" /><Caret /></button>
          <button aria-label="Разрез"><Icon n="slice" /></button>
          <button aria-label="Степени свободы"><Icon n="dof" /></button>
        </StatusTools>
        <StatusCell $w={127}>47,289 мм, -70,334 мм</StatusCell>
        <StatusCell $w={134}>Требуются размеры: 3</StatusCell>
        <StatusCell $w={38}>1</StatusCell>
        <StatusCell $w={38}>1</StatusCell>
      </Status>

      <Taskbar>
        <Orb aria-label="Пуск">
          <svg width="38" height="38" viewBox="0 0 38 38" aria-hidden="true">
            <defs><radialGradient id="orb" cx=".5" cy=".9" r=".8"><stop offset="0" stopColor="#52d6fa" /><stop offset=".5" stopColor="#1b6fa8" /><stop offset="1" stopColor="#1b3d63" /></radialGradient></defs>
            <circle cx="19" cy="19" r="17.500" fill="url(#orb)" stroke="#7fa8c4" />
            <path d="M3 16a16 16 0 0132 0q-16-6-32 0z" fill="#fff" opacity=".35" />
            <path d="M10 10q4-2 8 0l-2 8q-4-2-8 0z" fill="#f0622c" /><path d="M19.500 10.500q4 2 9 0l-2 8q-4 2-9 0z" fill="#8cc63e" />
            <path d="M8 20q4-2 8 0l-2 8q-4-2-8 0z" fill="#3a9be8" /><path d="M17 20q4 2 9 0l-2 8q-4 2-9 0z" fill="#fcc72c" />
          </svg>
        </Orb>
        {tasks.map((t) => <Task key={t.n} $open={t.open} $active={t.active} aria-label={t.label}><TaskIcon n={t.n} /></Task>)}
        <Streak />
        <Tray>
          <Lang>EN</Lang>
          <Up aria-label="Скрытые значки" />
          <TrayIcons>
            <button aria-label="Центр поддержки"><Icon n="flag" /></button>
            <button aria-label="Сеть"><Icon n="net" /></button>
            <button aria-label="Громкость"><Icon n="sound" /></button>
          </TrayIcons>
          <Clock>16:11<br />15.10.2017</Clock>
          <Peek aria-label="Показать рабочий стол" />
        </Tray>
      </Taskbar>
    </Shell>
  );
}
